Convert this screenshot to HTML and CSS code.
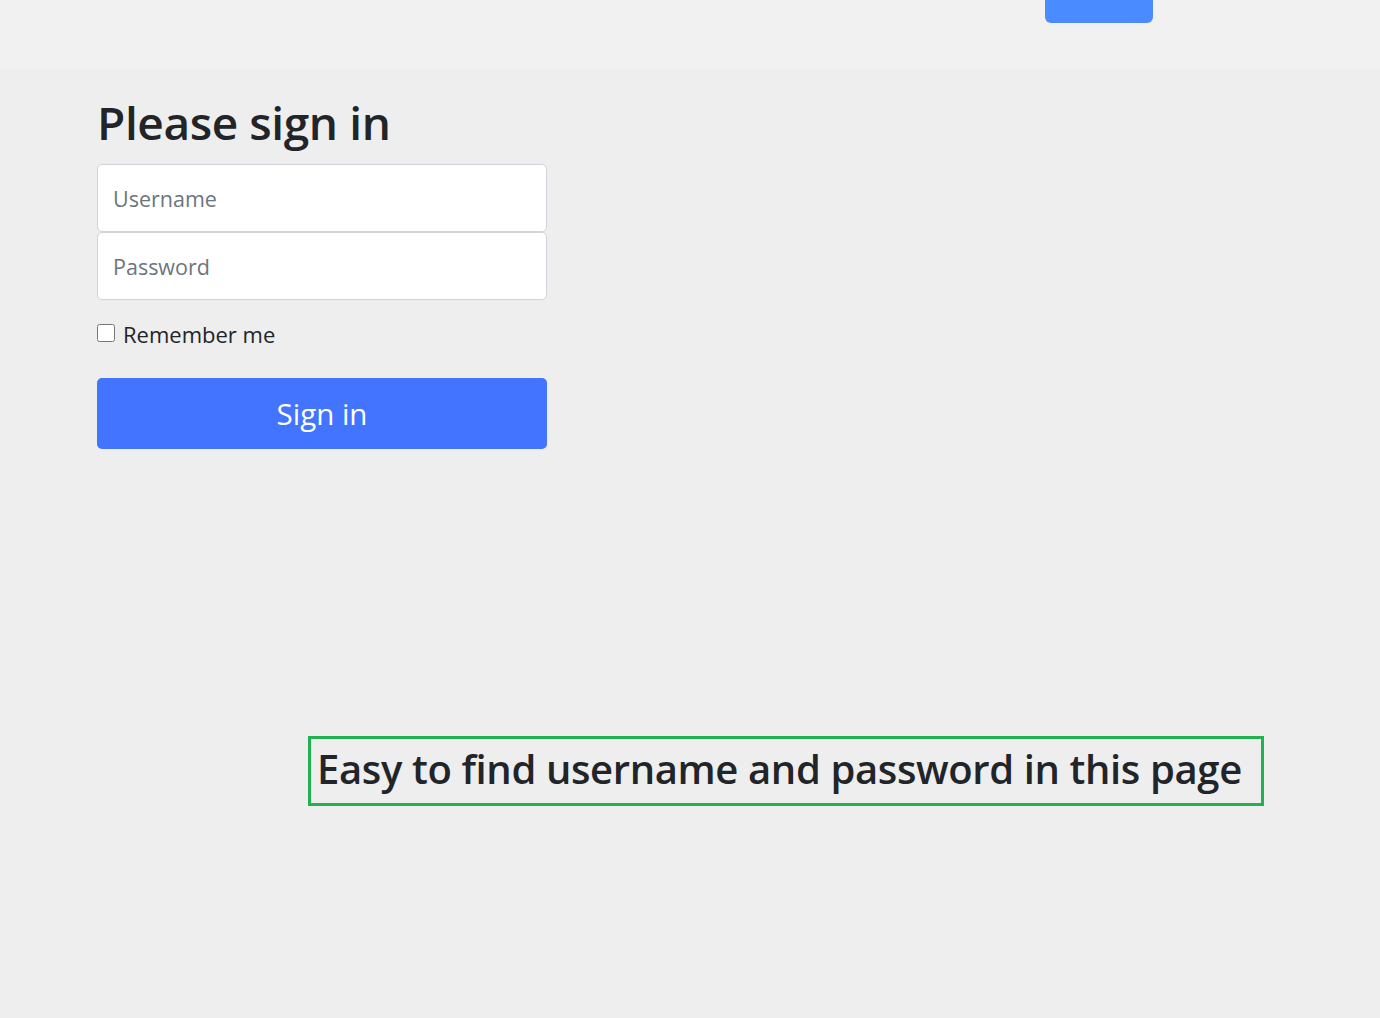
FILE: index.html
```html
<!DOCTYPE html>
<html>
<head>
<meta charset="utf-8">
<link rel="stylesheet" href="styles.css">
</head>
<body>
<header class="topbar">
  <button class="top-btn" type="button"></button>
</header>
<main class="page">
  <form class="signin">
    <h1 class="title">Please sign in</h1>
    <div class="fields">
      <input class="field" type="text" placeholder="Username">
      <input class="field" type="password" placeholder="Password">
    </div>
    <label class="remember"><input class="check" type="checkbox"> Remember me</label>
    <button class="submit" type="button">Sign in</button>
  </form>
  <div class="hint">Easy to find username and password in this page</div>
</main>
</body>
</html>
```
FILE: styles.css
```css
html, body {
  margin: 0;
  padding: 0;
}
body {
  background: #eeeeee;
  font-family: "Open Sans", "Noto Sans", sans-serif;
  color: #212529;
  height: 1018px;
  overflow: hidden;
}
.topbar {
  height: 69px;
  background: #f1f1f1;
  display: flex;
  align-items: flex-start;
  padding-left: 1045px;
  box-sizing: border-box;
}
.top-btn {
  width: 108px;
  height: 23px;
  border: none;
  background: #4a8bff;
  border-radius: 0 0 6px 6px;
  padding: 0;
}
.page {
  padding-left: 97px;
}
.signin {
  width: 450px;
  display: flex;
  flex-direction: column;
}
.title {
  margin: 18px 0 0 0;
  font-size: 46px;
  font-weight: 600;
  line-height: 70px;
  letter-spacing: -0.4px;
}
.fields {
  display: flex;
  flex-direction: column;
  margin-top: 7px;
}
.field {
  height: 68px;
  box-sizing: border-box;
  border: 1px solid #ced4da;
  border-radius: 5px;
  background: #fff;
  font-family: inherit;
  font-size: 21.5px;
  padding: 1px 15px 0 15px;
  color: #212529;
  outline: none;
}
.field::placeholder {
  color: #6c757d;
}
.remember {
  display: flex;
  align-items: center;
  gap: 8px;
  margin-top: 18px;
  font-size: 22px;
  height: 32px;
}
.check {
  width: 18px;
  height: 18px;
  margin: 0 0 2px 0;
}
.submit {
  margin-top: 28px;
  height: 71px;
  border: none;
  border-radius: 5px;
  background: #4374ff;
  color: #fff;
  font-family: inherit;
  font-size: 29.5px;
}
.hint {
  margin-top: 287px;
  margin-left: 211px;
  width: 956px;
  height: 70px;
  box-sizing: border-box;
  border: 3px solid #21b24f;
  font-size: 40px;
  font-weight: 600;
  line-height: 60px;
  padding-left: 6px;
  white-space: nowrap;
  letter-spacing: -0.37px;
}
```
